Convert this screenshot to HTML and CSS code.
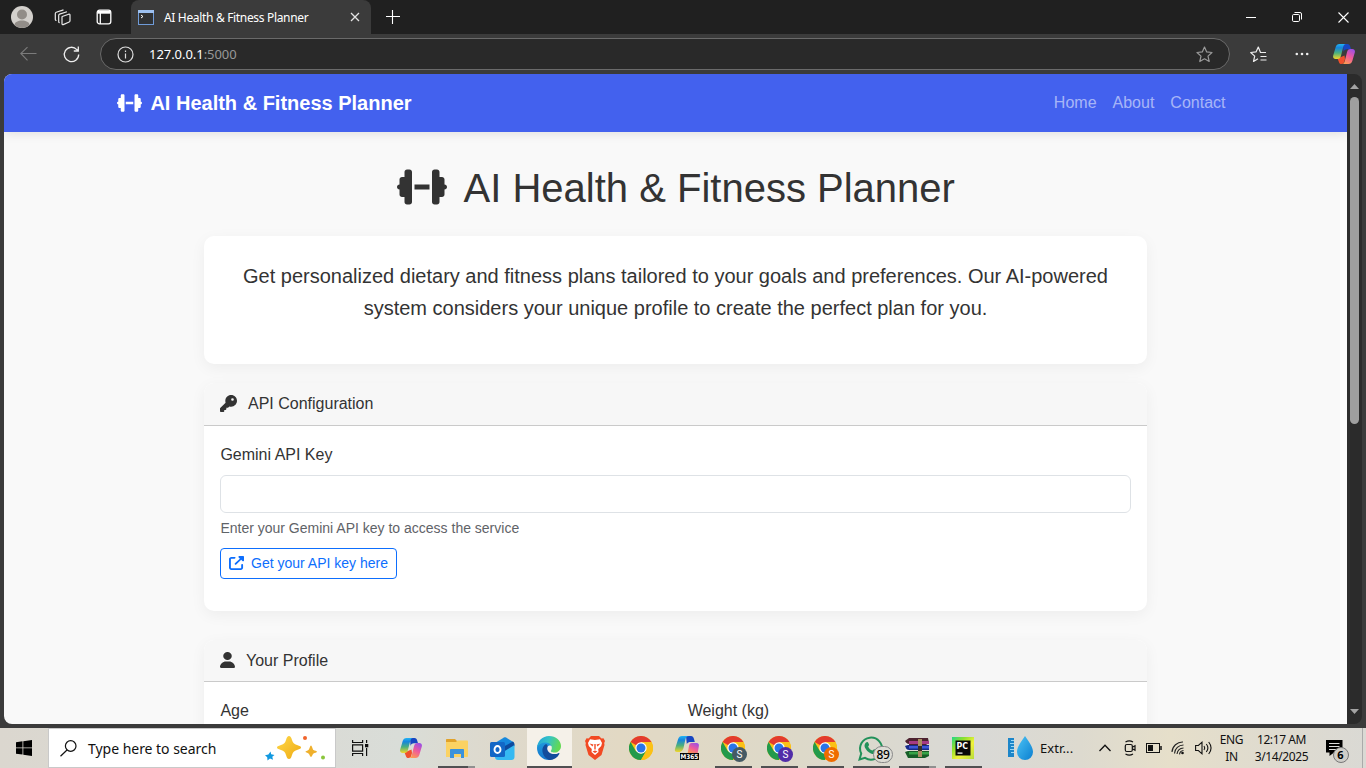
FILE: index.html
```html
<!DOCTYPE html>
<html lang="en">
<head>
<meta charset="utf-8">
<title>AI Health &amp; Fitness Planner</title>
<link rel="stylesheet" href="styles.css">
</head>
<body>
<svg class="defs" width="0" height="0" aria-hidden="true">
  <defs>
    <linearGradient id="cpA" x1="0" y1="0" x2="0" y2="1"><stop offset="0" stop-color="#22b4f4"/><stop offset=".25" stop-color="#1685dc"/><stop offset=".6" stop-color="#4db07c"/><stop offset="1" stop-color="#f4d62a"/></linearGradient>
    <linearGradient id="cpB" x1=".8" y1="0" x2=".3" y2="1"><stop offset="0" stop-color="#9a4fe6"/><stop offset=".5" stop-color="#ee5a9c"/><stop offset="1" stop-color="#ff9a52"/></linearGradient>
    <linearGradient id="edgeA" x1="0" y1="0" x2="1" y2=".3"><stop offset="0" stop-color="#1f9fdc"/><stop offset=".5" stop-color="#35c3c6"/><stop offset="1" stop-color="#62d954"/></linearGradient>
    <linearGradient id="edgeB" x1="0" y1="0" x2="0" y2="1"><stop offset="0" stop-color="#1f9bdc"/><stop offset="1" stop-color="#1474cc"/></linearGradient>
    <linearGradient id="gold" x1="0" y1="0" x2="1" y2="1"><stop offset="0" stop-color="#ffd84a"/><stop offset="1" stop-color="#eeaa12"/></linearGradient>
    <linearGradient id="drop" x1="0" y1="0" x2="1" y2="1"><stop offset="0" stop-color="#4cc3f5"/><stop offset="1" stop-color="#0b7fd0"/></linearGradient>
    <linearGradient id="pyc" x1="0" y1="0" x2="1" y2="1"><stop offset="0" stop-color="#21d789"/><stop offset=".3" stop-color="#8fe02c"/><stop offset=".6" stop-color="#f2f23a"/><stop offset="1" stop-color="#b5dc3c"/></linearGradient>
    <symbol id="dumbbell" viewBox="0 0 640 512"><path d="M96 64c0-17.7 14.3-32 32-32l32 0c17.7 0 32 14.3 32 32l0 384c0 17.7-14.3 32-32 32l-32 0c-17.7 0-32-14.3-32-32l0-64-32 0c-17.7 0-32-14.3-32-32l0-64c-17.7 0-32-14.3-32-32s14.3-32 32-32l0-64c0-17.7 14.3-32 32-32l32 0 0-64zm448 0l0 64 32 0c17.7 0 32 14.3 32 32l0 64c17.7 0 32 14.3 32 32s-14.3 32-32 32l0 64c0 17.7-14.3 32-32 32l-32 0 0 64c0 17.7-14.3 32-32 32l-32 0c-17.7 0-32-14.3-32-32l0-384c0-17.7 14.3-32 32-32l32 0c17.700 0 32 14.300 32 32zM416 224l0 64-192 0 0-64 192 0z"/></symbol>
    <symbol id="copilot" viewBox="0 0 22 20"><path fill="#1746c2" d="M10 0h4.500c1.600 0 2.300 1 2.700 2.500l.8 2.700h-4c-2 0-3 .8-3.500 2.800z"/><path fill="#f0502c" d="M4.500 14.500l7-3 .5 3.500-.8 3c-.4 1.300-1.200 2-2.700 2-1.600 0-2.300-.9-2.700-2.300z"/><path fill="url(#cpA)" d="M6.500 0H13c-1.500 0-2.300 1-2.800 3L8 11.700C7.400 14 6.500 15 4.500 15H2.700C.6 15-.3 13.500.2 11.500L2.700 3C3.300 1 4.500 0 6.500 0z"/><path fill="url(#cpB)" d="M15.500 20H9c1.500 0 2.300-1 2.800-3L14 8.300c.6-2.300 1.500-3.300 3.500-3.300h1.800c2.100 0 3 1.500 2.500 3.500L19.300 17c-.6 2-1.800 3-3.800 3z"/></symbol>
    <symbol id="chrome" viewBox="0 0 24 24"><circle cx="12" cy="12" r="12" fill="#fbc116"/><path fill="#e33b2e" d="M12 12L1.600 6A12 12 0 0 1 22.400 6H12z"/><path fill="#229a4b" d="M1.600 6l5.200 9L12 17.500 17.200 15 12 24A12 12 0 0 1 1.600 6z"/><path fill="#fbc116" d="M22.400 6H12l5.200 9L12 24A12 12 0 0 0 22.400 6z"/><circle cx="12" cy="12" r="5.700" fill="#fff"/><circle cx="12" cy="12" r="4.500" fill="#2a74e8"/></symbol>
  </defs>
</svg>

<div class="screen">
  <header class="tabstrip">
    <div class="tab-tools">
      <svg width="22" height="22" viewBox="0 0 22 22"><circle cx="11" cy="11" r="11" fill="#d3d0cc"/><circle cx="11" cy="8.500" r="5" fill="#928d88"/><path d="M3.500 19c0-6 15-6 15 0A11 11 0 0 1 3.500 19z" fill="#928d88"/></svg>
      <svg width="17" height="17" viewBox="0 0 17 17" fill="none" stroke="#e8e8e8" stroke-width="1.200" stroke-linejoin="round"><path d="M8.200 7.500l6.500-2.300c.8-.2 1.300.1 1.300.8v5.800c0 .6-.3 1-.8 1.200l-6 2.600c-.7.300-1.200 0-1.200-.8V8.300c0-.4.1-.6.200-.8z"/><path d="M5.700 13.700c-.8 0-1-.3-1-.9V6.500c0-.7.300-1.200.9-1.400L13 2.700"/><path d="M2.500 11.500c-.8 0-1.200-.3-1.200-.9V4.700c0-.7.300-1.200.9-1.400L9.500.9"/></svg>
      <svg width="16" height="16" viewBox="0 0 16 16" fill="none" stroke="#fff" stroke-width="1.300"><rect x="1.200" y="1.200" width="13.600" height="13.600" rx="2.300"/><path d="M1.500 3.200h13" stroke-width="3"/><path d="M4.300 4v11"/></svg>
    </div>
    <div class="tab">
      <svg width="16" height="15" viewBox="0 0 16 15"><rect x=".5" y=".5" width="15" height="14" fill="#303234" stroke="#6f9bd8"/><path fill="#9cc0f0" d="M0 0h16v3H0z"/><path d="M3 5l2 1.500L3 8" stroke="#fff" fill="none"/></svg>
      <span class="tab-title">AI Health &amp; Fitness Planner</span>
      <svg width="10" height="10" viewBox="0 0 10 10" stroke="#e4e4e4" stroke-width="1.300"><path d="M1 1l8 8M9 1L1 9"/></svg>
    </div>
    <svg class="new-tab" width="14" height="14" viewBox="0 0 14 14" stroke="#fff" stroke-width="1.100"><path d="M6.500 0v14M0 6.500h14"/></svg>
    <div class="window-buttons">
      <svg width="10" height="10" viewBox="0 0 10 10" stroke="#fff"><path d="M0 5.500h10"/></svg>
      <svg width="10" height="10" viewBox="0 0 10 10" stroke="#fff" fill="none"><rect x=".5" y="2.500" width="7" height="7" rx="1.200"/><path d="M2.500.5H8A1.500 1.500 0 0 1 9.500 2v5.500"/></svg>
      <svg width="11" height="11" viewBox="0 0 11 11" stroke="#fff" stroke-width="1.100"><path d="M.5.5l10 10M10.500.5l-10 10"/></svg>
    </div>
  </header>

  <div class="toolbar">
    <svg class="back" width="17" height="15" viewBox="0 0 17 15" stroke="#7b7b7b" stroke-width="1.100" fill="none"><path d="M16.500 6.500H1M7.500.2L.8 6.500l6.700 6.800"/></svg>
    <svg class="reload" width="17" height="17" viewBox="0 0 17 17" stroke="#eee" stroke-width="1.300" fill="none"><path d="M15.700 8.500A7.200 7.200 0 1 1 13.800 3.600L15.300 5M15.300.5V5h-4.500"/></svg>
    <div class="address">
      <svg width="17" height="17" viewBox="0 0 17 17" stroke="#ddd" stroke-width="1.200" fill="none"><circle cx="8.500" cy="8.500" r="7.500"/><path d="M8.500 7.500v5M8.500 4.500v1.500"/></svg>
      <span class="url">127.0.0.1<span class="port">:5000</span></span>
      <svg width="17" height="17" viewBox="0 0 17 17" stroke="#9a9a9a" stroke-width="1.200" fill="none" stroke-linejoin="round"><path d="M8.500 1l2.200 4.900 5.300.6-4 3.600 1.200 5.400-4.700-2.700-4.700 2.700L5 10.100 1 6.500l5.300-.6z"/></svg>
    </div>
    <div class="toolbar-end">
      <svg width="17" height="17" viewBox="0 0 17 17" stroke="#eee" stroke-width="1.200" fill="none" stroke-linejoin="round"><path d="M16 6.500h-5.500L8.300 1 6 5.900l-5.300.6 4 3.600-1.200 5.400L8 12.800M10.500 10.500h6M10.500 14h6"/></svg>
      <svg width="14" height="4" viewBox="0 0 14 4" fill="#eee"><circle cx="1.800" cy="2" r="1.300"/><circle cx="7" cy="2" r="1.300"/><circle cx="12.200" cy="2" r="1.300"/></svg>
      <svg width="22" height="20"><use href="#copilot"/></svg>
    </div>
  </div>

  <div class="frame">
    <div class="page">
      <nav class="navbar">
        <div class="brand"><svg width="25" height="20"><use href="#dumbbell"/></svg><span>AI Health &amp; Fitness Planner</span></div>
        <div class="links"><a>Home</a><a>About</a><a>Contact</a></div>
      </nav>
      <main class="content">
        <h1 class="title"><svg width="50" height="40"><use href="#dumbbell"/></svg><span>AI Health &amp; Fitness Planner</span></h1>
        <section class="card intro">
          <p>Get personalized dietary and fitness plans tailored to your goals and preferences. Our AI-powered<br>system considers your unique profile to create the perfect plan for you.</p>
        </section>
        <section class="card api">
          <div class="card-header">
            <svg width="17" height="17" viewBox="0 0 512 512"><path d="M336 352c97.200 0 176-78.800 176-176S433.200 0 336 0S160 78.800 160 176c0 18.700 2.900 36.800 8.300 53.700L7 391c-4.500 4.500-7 10.600-7 17l0 80c0 13.300 10.700 24 24 24l80 0c13.300 0 24-10.700 24-24l0-40 40 0c13.300 0 24-10.700 24-24l0-40 40 0c6.400 0 12.500-2.500 17-7l33.300-33.300c16.900 5.400 35 8.300 53.700 8.300zM376 96a40 40 0 1 1 0 80 40 40 0 1 1 0-80z"/></svg>
            <span class="after-icon">API Configuration</span>
          </div>
          <div class="card-body">
            <label class="label" for="key">Gemini API Key</label>
            <input class="input" id="key" type="password">
            <div class="hint">Enter your Gemini API key to access the service</div>
            <a class="button"><svg width="15" height="14" viewBox="0 0 512 512" preserveAspectRatio="none"><path d="M352 0c-12.900 0-24.600 7.800-29.600 19.800s-2.200 25.700 6.900 34.900L370.700 96 201.400 265.400c-12.500 12.500-12.500 32.800 0 45.300s32.800 12.500 45.300 0L416 141.300l41.400 41.400c9.200 9.200 22.900 11.900 34.900 6.900s19.800-16.600 19.800-29.600l0-128c0-17.700-14.300-32-32-32L352 0zM80 32C35.800 32 0 67.800 0 112L0 432c0 44.200 35.800 80 80 80l320 0c44.200 0 80-35.800 80-80l0-112c0-17.700-14.300-32-32-32s-32 14.300-32 32l0 112c0 8.800-7.200 16-16 16L80 448c-8.800 0-16-7.200-16-16l0-320c0-8.800 7.200-16 16-16l112 0c17.700 0 32-14.300 32-32s-14.300-32-32-32L80 32z"/></svg><span>Get your API key here</span></a>
          </div>
        </section>
        <section class="card profile">
          <div class="card-header">
            <svg width="15" height="16" viewBox="0 0 448 512" preserveAspectRatio="none"><path d="M224 256A128 128 0 1 0 224 0a128 128 0 1 0 0 256zm-45.700 48C79.800 304 0 383.800 0 482.300C0 498.700 13.300 512 29.700 512l388.600 0c16.400 0 29.700-13.300 29.700-29.700C448 383.800 368.200 304 269.700 304l-91.400 0z"/></svg>
            <span class="after-icon">Your Profile</span>
          </div>
          <div class="card-body fields"><span class="label">Age</span><span class="label">Weight (kg)</span></div>
        </section>
      </main>
    </div>
    <div class="scrollbar">
      <svg width="9" height="5" viewBox="0 0 9 5" fill="#a3a3a3"><path d="M4.500 0L9 5H0z"/></svg>
      <div class="thumb"></div>
      <svg width="9" height="5" viewBox="0 0 9 5" fill="#a3a3a3"><path d="M4.500 5L9 0H0z"/></svg>
    </div>
  </div>

  <footer class="taskbar">
    <div class="start"><svg width="16" height="16" viewBox="0 0 16 16"><path d="M0 2.200L6.500 1.300v6.200H0zM7.300 1.200L16 0v7.500H7.300zM0 8.300h6.500v6.300L0 13.700zM7.300 8.300H16V16l-8.700-1.200z"/></svg></div>
    <div class="search">
      <svg width="17" height="17" viewBox="0 0 17 17" fill="none" stroke="#111" stroke-width="1.200"><circle cx="10.700" cy="6" r="5.300"/><path d="M7 10L.5 16.300"/></svg>
      <span>Type here to search</span>
      <svg class="sparkles" width="62" height="26" viewBox="0 0 62 26"><path fill="url(#gold)" d="M24 1c1.500 0 2 1 3 4 1 3 2 4 5 5s4 1.500 4 2.500-1 1.500-4 2.500-4 2-5 5-1.500 4-3 4-2-1-3-4-2-4-5-5-4-1.500-4-2.500 1-1.500 4-2.500 4-2 5-5 1.500-4 3-4z"/><path fill="#efb02c" d="M46 10.500c1 0 1.500 4 2.500 4.500s3.500 1 3.500 1.800-2.500 1-3.500 1.700S47 22 46 22s-1.500-2.800-2.500-3.500-3-1-3-1.700 2-1 3-1.800 1.500-4.500 2.500-4.500z"/><path fill="#1299e0" d="M5.500 16.500l.7 2.800 3.300.7-2.200 1.800.7 3-3-1.300-2.500 2-.3-3.200L0 20.300l3.400-.9z"/><circle cx="40" cy="3" r="2" fill="#f0642c"/><circle cx="58" cy="22.500" r="2" fill="#8ac53c"/></svg>
    </div>
    <div class="task-view"><svg width="17" height="16" viewBox="0 0 17 16" fill="none" stroke="#111" stroke-width="1.200"><path d="M.6 0v2.500h10V0M.6 16v-2.500h10V16M.6 4.800h10v6.400H.6zM14.600 0v3M14.600 8v8"/><path fill="#111" stroke="none" d="M13 4h3.300v3.300H13z"/></svg></div>
    <div class="apps">
      <div class="app"><svg width="22" height="20"><use href="#copilot"/></svg></div>
      <div class="app running stacked"><svg width="22" height="19" viewBox="0 0 22 19"><path fill="#e1a22a" d="M0 1c0-.6.4-1 1-1h8l2 2v3H0z"/><path fill="#fbd263" d="M0 3h10l1.500-1.500H21c.6 0 1 .4 1 1V17c0 .6-.4 1-1 1H0z"/><path fill="#3b92dc" d="M4 11c0-.6.4-1 1-1h12c.6 0 1 .4 1 1v8h-3v-4H8v4H4z"/></svg></div>
      <div class="app"><svg width="25" height="23" viewBox="0 0 25 23"><path fill="#1688dd" d="M5 6l9-5.500c.7-.4 1.300-.4 2 0L24 5.500V18H5z"/><path fill="#0d4a9e" d="M11 11L23 4.500l1.500 2.300V9L15 15z"/><path fill="#35b9f2" d="M5 20l19.500-12v12c0 1.700-1.300 3-3 3H8c-1.700 0-3-1.300-3-3z"/><rect y="5" width="15" height="15" rx="1.500" fill="#1267c6"/><ellipse cx="7.500" cy="12.500" rx="3" ry="3.500" fill="none" stroke="#fff" stroke-width="1.900"/></svg></div>
      <div class="app running active"><svg width="24" height="24" viewBox="0 0 24 24"><circle cx="12" cy="12" r="12" fill="#f5f1e9"/><path fill="url(#edgeB)" d="M0 12C0 8 3.500 5.500 8 5.500c4 0 7 2 7.300 4.500-2-1-4.300-.5-5.500 1-2.500 3.500.2 9 5.200 9 3 0 5.300-1 6.700-2.200C19.500 21.600 16 24 12 24A12 12 0 0 1 0 12z"/><path fill="#124c9c" d="M9 8c-2.500 1.500-4 4-3.600 7.300C6 20 9.500 23.600 13 24c4-.2 7.500-2.500 9.300-6 .4-.7-.2-1.200-.9-.8-1.200.6-2.600.9-4 .9-5 0-8.400-3.800-6.800-7.300.2-.5-.3-2.500-1.600-2.800z"/><path fill="url(#edgeA)" d="M0 11.500C.5 5 5.500 0 12 0c7 0 12 4.800 12 10 0 4-3 6.600-6.500 6.600-2.800 0-4.300-1-3.300-2.300C16 11.500 14 6.500 8.500 6.500 4.500 6.500 1.300 8.500 0 11.500z"/></svg></div>
      <div class="app"><svg width="20" height="24" viewBox="0 0 20 24"><path fill="#f24a23" d="M6 0h8l2.500 2.500 2-.3L20 5l-.8 2 .3 2-3 10L10 24l-6.500-5-3-10 .3-2L0 5l1.500-2.800 2 .3z"/><path fill="#fff" d="M10 4l5-.8L17 7l-.8 3-3 3 .3 3-3.500 3-3.500-3 .3-3-3-3L3 7l2-3.800z"/><path fill="#f24a23" d="M4.500 7.500l4 1-1 2zM15.500 7.500l-4 1 1 2zM9.300 8h1.400v5L10 14l-.7-1zM7.500 15.500l2.500-1 2.500 1-2.500 1.500z"/></svg></div>
      <div class="app"><svg width="24" height="24"><use href="#chrome"/></svg></div>
      <div class="app"><svg width="24" height="24" viewBox="0 0 24 24"><path fill="#1746c2" d="M11 0h5c1.500 0 2.500 1 3 3l.8 3h-4c-2 0-3 .5-4 2z"/><path fill="url(#cpA)" d="M7 0h7c-2 0-3 1-3.500 3L8.500 12c-.6 2-1.500 3-3.500 4H2c-2 0-2.500-1.500-2-3L3 3.500C3.600 1 5 0 7 0z"/><path fill="url(#cpB)" d="M16.500 7h5c2 0 2.800 1.500 2.300 3.500L22.500 18h-10L14 10c.4-2 1-3 2.500-3z"/><rect x="5" y="17" width="19" height="7" fill="#050505"/><text class="m365" x="5.600" y="22.800" textLength="17.800" lengthAdjust="spacingAndGlyphs">M365</text></svg></div>
      <div class="app running"><svg width="24" height="24"><use href="#chrome"/></svg><span class="badge slate">S</span></div>
      <div class="app running"><svg width="24" height="24"><use href="#chrome"/></svg><span class="badge violet">S</span></div>
      <div class="app running"><svg width="24" height="24"><use href="#chrome"/></svg><span class="badge orange">S</span></div>
      <div class="app running"><svg width="25" height="25" viewBox="0 0 25 25"><path fill="none" stroke="#22915a" stroke-width="2" d="M1.500 23.500l1.700-6A11 11 0 1 1 7 21.800z"/><path fill="#22915a" d="M8 6.500c1-1 2-.6 2.400.4l.7 1.900c.1.500-1 1.600-.9 1.900 1 2 2.300 3.200 4.200 3.900.5.100 1.200-1.500 1.800-1.300l2.300 1.200c.7.500.1 2-.6 2.700-1.200 1.100-3 1-5 .2-3-1.300-4.700-3.200-6-5.800-.8-2-.2-4 1.100-5.100z"/></svg><span class="badge count">89</span></div>
      <div class="app running stacked"><svg width="24" height="20" viewBox="0 0 24 20"><path fill="#4d2230" d="M0 3l4-3h19l1 5-3 2H3z"/><path fill="#a53a84" d="M4 3h20v3H4z"/><path fill="#162a8a" d="M0 8l3-1h21v5H2z"/><path fill="#3f58d8" d="M4 8h20v2.500H4z"/><path fill="#175e28" d="M0 14l3-1h21v5l-4 2H3z"/><path fill="#37a447" d="M4 14h20v2.500H4z"/><path fill="#eee" d="M0 5l4 1v1H1zM0 11l4 1v1H1z"/><path fill="#a98d61" d="M13 1h4v18h-4z"/><path fill="#352e28" d="M13 8h4v5h-4z"/></svg></div>
      <div class="app running"><svg width="22" height="22" viewBox="0 0 22 22"><rect width="22" height="22" fill="url(#pyc)"/><rect x="3.500" y="3.500" width="15" height="15" fill="#080808"/><path fill="#fff" d="M5.500 15.500h5v1.200h-5z"/><text class="pc" x="4.600" y="11.800" textLength="11.500" lengthAdjust="spacingAndGlyphs">PC</text></svg></div>
    </div>
    <div class="weather">
      <svg width="25" height="24" viewBox="0 0 25 24"><path fill="#1d86c9" d="M0 2h6v19H0z"/><path stroke="#9ad8f5" d="M3 4.500h3M2 7.500h4M3 10.500h3M2 13.500h4M3 16.500h3"/><path fill="url(#drop)" d="M17 0c3.500 5.500 8 10.500 8 16a8 8 0 0 1-16 0C9 10.500 13.500 5.500 17 0z"/></svg>
      <span>Extr...</span>
    </div>
    <div class="tray">
      <svg width="12" height="8" viewBox="0 0 12 8" fill="none" stroke="#111" stroke-width="1.300"><path d="M.5 7L6 1.200 11.500 7"/></svg>
      <svg width="12" height="16" viewBox="0 0 12 16" fill="none" stroke="#111" stroke-width="1.200"><rect x="1.300" y="4.500" width="7" height="7" rx="1.500"/><path d="M8.300 7.200l2.700-1.500v4.600L8.300 8.800M1.500 2c2.500-1.500 5-1.500 7.500 0M1.500 14c2.500 1.500 5 1.500 7.500 0"/></svg>
      <svg width="16" height="10" viewBox="0 0 16 10" fill="none" stroke="#111"><rect x=".5" y=".5" width="13" height="9"/><path d="M15 3v4" stroke-width="1.500"/><path fill="#111" stroke="none" d="M2 2h5v6H2z"/></svg>
      <svg width="14" height="14" viewBox="0 0 14 14" fill="none" stroke="#222" stroke-width="1.100"><path d="M1 11A10.500 10.500 0 0 1 12 1M3.500 12.500A9 9 0 0 1 12.500 4M6 13a7 7 0 0 1 6.500-6M8.500 13.300A4.500 4.500 0 0 1 12.500 9.500"/><circle cx="11.500" cy="12" r="1.300" fill="#111" stroke="none"/></svg>
      <svg class="volume" width="17" height="14" viewBox="0 0 17 14" fill="none" stroke="#111" stroke-width="1.100"><path d="M.6 4.500h2.800L7 1.200v11.600L3.400 9.500H.6zM9 5c1 1.300 1 2.700 0 4M11.300 3c2 2.500 2 5.500 0 8M13.700 1c3 3.800 3 8.200 0 12"/></svg>
      <div class="lines lang"><span>ENG</span><span>IN</span></div>
      <div class="lines clock"><span>12:17 AM</span><span>3/14/2025</span></div>
      <div class="notice"><svg width="17" height="16" viewBox="0 0 17 16"><path d="M0 0h16.500v12.500H8L3.500 16v-3.500H0z"/><path stroke="#ddd" d="M3 3.500h10.500M3 6.500h10.500M3 9.500h7"/></svg><span class="badge six">6</span></div>
    </div>
  </footer>
</div>
</body>
</html>
```
FILE: styles.css
```css
* { box-sizing: border-box; }
body { margin: 0; overflow: hidden; }
svg { display: block; flex: none; overflow: visible; }
.defs { position: absolute; }
.screen {
  width: 1366px; height: 768px; display: flex; flex-direction: column;
  background: #3b3b3b; overflow: hidden;
  font-family: "Noto Sans", "Open Sans", sans-serif;
}

/* Browser chrome */
.tabstrip { height: 34px; background: #202020; display: flex; align-items: center; }
.tab-tools { width: 131px; padding-left: 11px; display: flex; align-items: center; gap: 21px; flex: none; }
.tab-tools svg:last-child { margin-left: 4px; }
.tab {
  width: 240px; height: 34px; padding: 0 11px 0 7px; background: #3b3b3b;
  border-radius: 8px 8px 0 0; display: flex; align-items: center; gap: 10px;
}
.tab-title { flex: 1; color: #fff; font-size: 12px; letter-spacing: -0.33px; white-space: nowrap; }
.new-tab { margin-left: 15px; }
.window-buttons { margin-left: auto; padding-right: 17px; display: flex; align-items: center; gap: 36px; }

.toolbar { height: 40px; background: #3b3b3b; display: flex; align-items: center; padding-left: 20px; }
.reload { margin-left: 26px; }
.address {
  width: 1130px; height: 32px; margin-left: 20px; padding: 0 16px;
  border: 1px solid #6a6a6a; border-radius: 16px; background: #292929;
  display: flex; align-items: center; gap: 15px; flex: none;
}
.url { flex: 1; color: #fff; font-size: 13px; letter-spacing: -0.05px; }
.port { color: #989898; }
.toolbar-end { display: flex; align-items: center; margin-left: 20px; gap: 28px; }
.toolbar-end svg:last-child { margin-left: -4px; }

.frame { height: 650px; margin: 0 4px 4px; display: flex; border-radius: 8px; overflow: hidden; }
.scrollbar {
  width: 15px; background: #2b2b2b; display: flex; flex-direction: column;
  align-items: center; padding: 10px 0;
}
.thumb { width: 9px; height: 327px; margin: 8px 0 auto; border-radius: 5px; background: #9f9f9f; }

/* Planner page */
.page {
  width: 1343px; background: #f9f9f9; color: #333; overflow: hidden;
  font: 16px/25.6px "Liberation Sans", Arial, sans-serif;
}
.navbar {
  height: 58px; padding: 0 121.500px 0 113.400px; background: #4361ee;
  box-shadow: 0 2px 10px rgba(0, 0, 0, 0.1);
  display: flex; align-items: center; justify-content: space-between;
}
.brand { display: flex; align-items: center; gap: 8px; color: #fff; font-size: 20px; font-weight: 700; }
.brand span { padding-top: 1px; }
.brand svg, .title svg, .card-header svg, .button svg { fill: currentColor; }
.links { display: flex; gap: 16px; color: rgba(255, 255, 255, 0.55); }
.content { width: 943px; margin: 0 auto; }
.title {
  margin: 0; padding: 32px 0 0 1px; height: 103.5px; font-size: 40px; line-height: 48px; font-weight: 400;
  display: flex; justify-content: center; gap: 16.500px;
}
.title svg { margin-top: 3px; }
.card { background: #fff; border-radius: 10px; box-shadow: 0 4px 15px rgba(0, 0, 0, 0.05); overflow: hidden; }
.intro { height: 128px; padding-top: 24px; }
.intro p { margin: 0; text-align: center; font-size: 20px; line-height: 32px; }
.api { margin-top: 19.600px; height: 227.800px; }
.profile { margin-top: 28.800px; height: 200px; }
.card-header {
  height: 42.600px; padding: 0 16px 1px; background: #f7f7f7; border-bottom: 1px solid #cacaca;
  display: flex; align-items: center;
}
.profile .card-header { padding-bottom: 0; }
.after-icon { margin-left: 11px; }
.card-body { padding: 16px; }
.label { display: block; margin-bottom: 8px; padding-left: 0.4px; }
.input { display: block; width: 100%; height: 38px; border: 1px solid #dee2e6; border-radius: 6px; background: #fff; }
.hint { margin-top: 4px; padding-left: 0.4px; font-size: 14px; line-height: 22.400px; color: #5f6368; }
.button {
  display: inline-flex; align-items: center; gap: 7px; height: 31px; margin-top: 8px; padding: 0 8px;
  border: 1px solid #0d6efd; border-radius: 4px; color: #0d6efd; font-size: 14px; line-height: 21px;
}
.fields { display: grid; grid-template-columns: 1fr 1fr; column-gap: 23.500px; }

/* Taskbar */
.taskbar {
  height: 40px; display: flex; color: #111;
  background: linear-gradient(90deg, #dbd7cf 0, #dadbd6 330px, #d9ddd8 400px, #ded9cc 500px, #e2d9c4 620px, #ddd9c9 800px, #d9d9d6 980px, #dddacf 1080px, #e6dfca 1170px, #dfdbcf 1270px, #dad9d4 100%);
}
.start { width: 48px; display: flex; align-items: center; justify-content: center; }
.search {
  width: 288px; padding: 0 8px 0 11px; background: #fff; border: 1px solid #c9c9c9;
  display: flex; align-items: center; gap: 11px; font-size: 14px; letter-spacing: -0.03px;
}
.sparkles { margin-left: auto; }
.task-view { width: 52px; display: flex; align-items: center; padding-left: 16px; }
.apps { display: flex; flex: none; }
.app { width: 46px; padding-right: 1px; position: relative; display: flex; align-items: center; justify-content: center; }
.active { width: 45px; margin-left: 1px; padding: 0 1px 0 0; background: #f5f1e9; }
.running::after { content: ""; position: absolute; left: 4px; right: 5px; bottom: 0; height: 2px; background: #505052; }
.active ~ .running::after { left: 5px; right: 4px; }
.running.active::after { left: 0; right: 0; }
.stacked::after { background: linear-gradient(90deg, #505052 30px, #909090 30px); }
.badge {
  position: absolute; left: 22px; top: 19px; width: 15px; height: 15px; border-radius: 50%;
  color: #fff; font: 10px/15px Roboto, sans-serif; text-align: center;
}
.slate { background: #455a64; }
.violet { background: #512da8; }
.orange { background: #ef6c00; }
.count {
  left: 25px; top: 18px; width: 20px; height: 17px; border: 1px solid #888; border-radius: 9px;
  background: #dddcd5; color: #000; font: 500 12px/15px "Noto Sans", sans-serif; letter-spacing: -0.3px;
}
.m365 { fill: #fff; font: 700 6.500px "DejaVu Sans", sans-serif; }
.pc { fill: #fff; font: 700 8px "DejaVu Sans", sans-serif; }
.weather { width: 112px; padding-left: 22px; display: flex; align-items: center; gap: 7px; font-size: 13px; letter-spacing: 0.1px; }
.tray { flex: 1; display: flex; align-items: center; padding-left: 1px; }
.tray > svg:nth-child(n+2) { margin-left: 9.500px; }
.tray > svg:nth-child(2) { margin-left: 13px; }
.tray > .volume { margin-left: 8px; }
.lines { display: flex; flex-direction: column; align-items: center; font-size: 12px; line-height: 17px; white-space: nowrap; letter-spacing: -0.4px; }
.lang { width: 40px; }
.clock { width: 60px; }
.notice { position: relative; margin-left: 14px; padding-right: 19px; border-right: 1px solid #aaa; height: 40px; display: flex; align-items: center; }
.six { left: 7px; top: 19px; width: 16px; height: 16px; border: 1px solid #777; background: #cfcec9; color: #000; font: 700 11px/14px "Noto Sans", sans-serif; }
```
